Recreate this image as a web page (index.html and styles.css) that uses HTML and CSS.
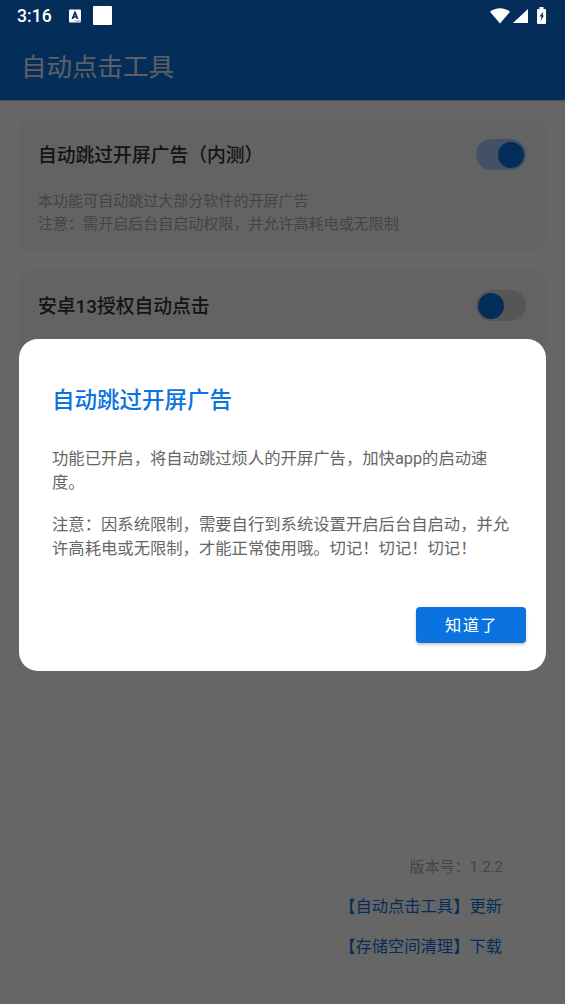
FILE: index.html
```html
<!DOCTYPE html>
<html lang="zh-CN">
<head>
<meta charset="utf-8">
<title>自动点击工具</title>
<link rel="stylesheet" href="styles.css">
</head>
<body>
<div class="screen">
  <header class="appbar"><h1 class="appbar-title">自动点击工具</h1></header>
  <main class="content">
    <section class="card">
      <div class="card-row">
        <h2 class="card-title">自动跳过开屏广告（内测）</h2>
        <span class="switch switch-on"><span class="thumb"></span></span>
      </div>
      <p class="card-note">本功能可自动跳过大部分软件的开屏广告<br>注意：需开启后台自启动权限，并允许高耗电或无限制</p>
    </section>
    <section class="card">
      <div class="card-row">
        <h2 class="card-title">安卓13授权自动点击</h2>
        <span class="switch"><span class="thumb"></span></span>
      </div>
    </section>
  </main>
  <footer class="footer">
    <span class="version">版本号：1.2.2</span>
    <a class="link">【自动点击工具】更新</a>
    <a class="link">【存储空间清理】下载</a>
  </footer>
</div>
<div class="overlay">
  <div class="statusbar">
    <span class="clock">3:16</span>
    <svg class="icon-a" viewBox="0 0 12 14"><path fill="#fff" d="M1 .5h10a1 1 0 0 1 1 1v11a1 1 0 0 1-1 1H1a1 1 0 0 1-1-1v-11a1 1 0 0 1 1-1z"/><path fill="none" stroke="#042e59" stroke-width="1.7" d="M3.3 10 6 3.5 8.7 10M4.3 8h3.4"/><path stroke="#042e59" stroke-dasharray="1 1" d="M6.5 12H12"/></svg>
    <span class="square"></span>
    <svg class="icon-wifi" viewBox="0 0 20 16"><path fill="#fff" d="M0 3.8C5.5-.9 14.5-.9 20 3.8L10 15.5z"/></svg>
    <svg class="icon-signal" viewBox="0 0 15 14"><path fill="#fff" d="M15 0v14H0z"/></svg>
    <svg class="icon-battery" viewBox="0 0 9 17"><path fill="#fff" d="M2.5 0h4v2H8q1 0 1 1v13q0 1-1 1H1q-1 0-1-1V3q0-1 1-1h1.500z"/><path fill="#042e59" d="M6.400 4.500 2.500 9.500H4.500L3.500 14 7 8.500H5.500z"/></svg>
  </div>
  <div class="dialog">
    <h2 class="dialog-title">自动跳过开屏广告</h2>
    <p class="dialog-text">功能已开启，将自动跳过烦人的开屏广告，加快app的启动速<br>度。</p>
    <p class="dialog-text">注意：因系统限制，需要自行到系统设置开启后台自启动，并允<br>许高耗电或无限制，才能正常使用哦。切记！切记！切记！</p>
    <button class="confirm">知道了</button>
  </div>
</div>
</body>
</html>
```
FILE: styles.css
```css
* { box-sizing: border-box; }
body, h1, h2, p { margin: 0; }
body {
  position: relative;
  height: 1004px;
  overflow: hidden;
  font-family: Roboto, "Noto Sans CJK SC", sans-serif;
}
.screen {
  display: flex;
  flex-direction: column;
  height: 1004px;
  background: #fff;
}
.appbar {
  height: 100px;
  padding: 49px 21px 0;
  background: #0b73df;
  box-shadow: 0 1px 1px rgba(0, 0, 0, .2);
}
.appbar-title {
  font-size: 25.5px;
  font-weight: 400;
  line-height: 36px;
  color: #fff;
  opacity: .9;
}
.content {
  flex: 1;
  display: flex;
  flex-direction: column;
  gap: 19px;
  padding: 19px 19px 0;
}
.card {
  height: 132px;
  padding: 20px 20px 19px 19px;
  border-radius: 12px;
  background: #f8f8f8;
}
.card-row {
  display: flex;
  align-items: center;
  justify-content: space-between;
  height: 31px;
}
.card-title {
  padding-top: 2px;
  font-size: 18.8px;
  font-weight: 500;
  line-height: 32px;
  color: #333;
}
.card-note {
  margin-top: 20px;
  font-size: 15.04px;
  line-height: 23px;
  color: #aaa;
}
.switch {
  display: flex;
  align-items: center;
  width: 50px;
  height: 31px;
  padding: 0 2px;
  border-radius: 15.5px;
  background: #d6d6d6;
}
.switch-on {
  justify-content: flex-end;
  background: #aacbfa;
}
.thumb {
  width: 26px;
  height: 26px;
  border-radius: 50%;
  background: #0b73df;
}
.footer {
  display: flex;
  flex-direction: column;
  align-items: flex-end;
  padding: 0 63px 37px 0;
}
.version {
  margin-right: -1px;
  font-size: 15.04px;
  line-height: 40px;
  color: #aaa;
}
.link {
  font-size: 16.3px;
  line-height: 40px;
  color: #0b73df;
}
.overlay {
  position: absolute;
  inset: 0;
  background: rgba(0, 0, 0, .6);
}
.statusbar {
  display: flex;
  align-items: center;
  height: 31px;
  padding: 0 19px 0 17px;
  color: #fff;
}
.clock {
  width: 52px;
  padding-top: 1px;
  font-size: 17.6px;
  font-weight: 500;
  line-height: 30px;
}
.icon-a { width: 12px; height: 14px; }
.square {
  width: 19px;
  height: 19px;
  margin-left: 12px;
  border-radius: 1px;
  background: #fff;
}
.icon-wifi { width: 20px; height: 16px; margin-left: auto; }
.icon-signal { width: 15px; height: 14px; margin-left: 3px; }
.icon-battery { width: 9px; height: 17px; margin-left: 9px; }
.dialog {
  display: flex;
  flex-direction: column;
  height: 332px;
  margin: 308px 19px 0;
  padding: 45px 20px 28px 33px;
  border-radius: 19px;
  background: #fff;
}
.dialog-title {
  margin-bottom: 30px;
  font-size: 22.5px;
  font-weight: 500;
  line-height: 33px;
  color: #0b73df;
}
.dialog-text {
  margin-bottom: 18px;
  font-size: 16.33px;
  line-height: 24px;
  white-space: nowrap;
  color: #666;
}
.confirm {
  align-self: flex-end;
  width: 110px;
  height: 36px;
  margin-top: auto;
  padding: 0 0 2px 1px;
  border: 0;
  border-radius: 4px;
  background: #0b73df;
  box-shadow: 0 2px 3px rgba(0, 0, 0, .22);
  font: 400 16.3px Roboto, "Noto Sans CJK SC", sans-serif;
  letter-spacing: 1.4px;
  color: #fff;
}
```
